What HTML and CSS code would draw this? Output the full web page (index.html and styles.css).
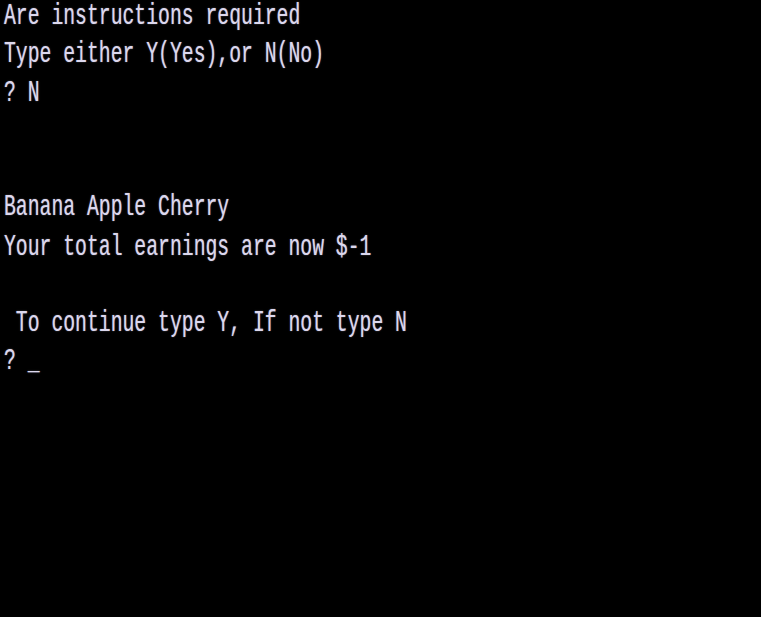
FILE: index.html
```html
<!DOCTYPE html>
<html>
<head>
<meta charset="utf-8">
<link rel="stylesheet" href="styles.css">
</head>
<body>
<div class="screen">
<div class="term">
<div class="line">Are instructions required</div>
<div class="line">Type either Y(Yes),or N(No)</div>
<div class="line">? N</div>
<div class="line"> </div>
<div class="line"> </div>
<div class="line">Banana Apple Cherry</div>
<div class="line">Your total earnings are now $-1</div>
<div class="line"> </div>
<div class="line"> To continue type Y, If not type N</div>
<div class="line">? <span class="cursor">_</span></div>
</div>
</div>
</body>
</html>
```
FILE: styles.css
```css
html, body {
  margin: 0;
  padding: 0;
  background: #000;
  height: 100%;
  overflow: hidden;
}
.screen {
  width: 761px;
  height: 617px;
  background: #000;
  padding: 0 0 0 4px;
  box-sizing: border-box;
}
.term {
  font-family: "Liberation Mono", monospace;
  font-size: 19.75px;
  line-height: 25.26px;
  color: #dcd8ee;
  transform-origin: 0 0;
  transform: translateY(-2px) scaleY(1.52);
  text-shadow: 0 0 1px rgba(220, 216, 238, 0.6);
}
.line {
  height: 25.26px;
  white-space: pre;
}
```
